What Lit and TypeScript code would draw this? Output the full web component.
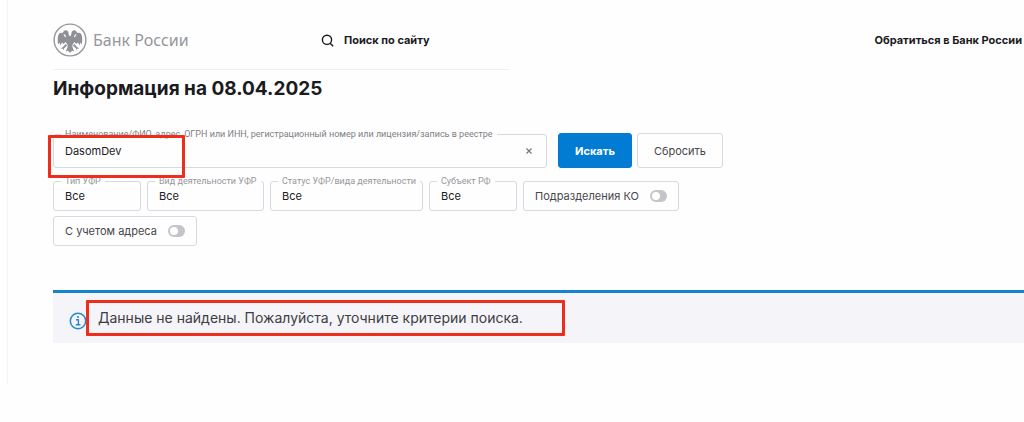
import { LitElement, html, css, svg } from "lit";
import { customElement, property } from "lit/decorators.js";

const eagle = svg`
  <circle cx="17" cy="17" r="15.9" fill="none" stroke="#96969c" stroke-width="1.4" />
  <g fill="#8f8f96">
    <path d="M5.2 21.5 C4.4 17.5 4.6 12.8 6.2 10.6 C7.4 9.2 9.4 9.6 10.4 10.8 L11.6 13.4 L12.6 14.6 C13.2 13.4 12.8 12 11.8 11.4 C10.8 11 10 10.6 9.4 10 L10.6 8.6 C11.8 6.6 14.8 7 15.4 9.4 L16 12.4 L17 13.2 L18 12.4 L18.6 9.4 C19.2 7 22.2 6.6 23.4 8.6 L24.6 10 C24 10.6 23.2 11 22.2 11.4 C21.2 12 20.8 13.4 21.4 14.6 L22.4 13.4 L23.6 10.8 C24.6 9.6 26.6 9.2 27.8 10.6 C29.4 12.8 29.6 17.5 28.8 21.5 L27.4 19.6 L26.6 22.4 L25 19.4 L23.4 21 L21.4 19 L19.6 21.4 L19.4 24 L21.2 28.4 L19 27.8 L17 29.8 L15 27.8 L12.8 28.4 L14.6 24 L14.4 21.4 L12.6 19 L10.6 21 L9 19.4 L7.4 22.4 L6.6 19.6 Z" />
    <path d="M12.8 20.8 L14 22.4 L11 25.4 L10.4 27 L9.4 25.6 L7.6 25.4 L10 24 Z M21.2 20.8 L20 22.4 L23 25.4 L23.6 27 L24.6 25.6 L26.4 25.4 L24 24 Z" />
  </g>
`;

const base = css`
  * {
    box-sizing: border-box;
  }
  button,
  input,
  select {
    font: inherit;
    color: inherit;
    margin: 0;
  }
`;

@customElement("filter-select")
export class FilterSelect extends LitElement {
  @property() label = "";

  static styles = [
    base,
    css`
      :host {
        display: block;
        position: relative;
      }
      .caption {
        position: absolute;
        left: 8px;
        top: -6px;
        padding: 0 4px;
        background: #fefefe;
        color: #96969c;
        font: 9px/12px Roboto, sans-serif;
        white-space: nowrap;
      }
      .control {
        appearance: none;
        display: block;
        width: 100%;
        height: 30px;
        padding: 0 11px;
        border: 1px solid #d9d7e0;
        border-radius: 3px;
        background: #fefefe;
      }
    `,
  ];

  render() {
    return html`
      <label class="caption" for="control">${this.label}</label>
      <select class="control" id="control"><option>Все</option></select>
    `;
  }
}

@customElement("filter-toggle")
export class FilterToggle extends LitElement {
  @property() label = "";

  static styles = [
    base,
    css`
      :host {
        display: block;
      }
      .box {
        display: flex;
        align-items: center;
        gap: 11px;
        height: 30px;
        padding: 0 11px;
        border: 1px solid #d9d7e0;
        border-radius: 3px;
        color: #46464c;
        white-space: nowrap;
      }
      .switch {
        appearance: none;
        display: flex;
        width: 17px;
        height: 12px;
        padding: 2px;
        border-radius: 6px;
        background: #c6c3ca;
      }
      .switch::before {
        content: "";
        width: 8px;
        height: 8px;
        border-radius: 50%;
        background: #fff;
      }
      .switch:checked {
        justify-content: flex-end;
        background: #027bd3;
      }
    `,
  ];

  render() {
    return html`
      <label class="box">
        <span>${this.label}</span>
        <input class="switch" type="checkbox" role="switch" />
      </label>
    `;
  }
}

@customElement("app-root")
export class AppRoot extends LitElement {
  static styles = [
    base,
    css`
      :host {
        display: block;
        min-height: 100vh;
        padding-left: 7px;
        background: #fefefe;
        color: #1b1b1f;
        font: 11px/16px Inter, "Noto Sans", sans-serif;
      }
      .page {
        border-left: 1px solid #f6f4f8;
        padding: 11px 0 0 45px;
        min-height: 384px;
      }
      .header {
        display: flex;
        align-items: center;
        height: 58px;
        padding-right: 2px;
        font-weight: 700;
      }
      .brand {
        display: flex;
        align-items: center;
        gap: 6px;
        flex: 0 0 268px;
        color: #96969c;
        font: 400 16px/24px "Noto Sans", sans-serif;
        text-decoration: none;
      }
      .search-link {
        display: flex;
        align-items: center;
        gap: 10px;
        color: inherit;
        text-decoration: none;
      }
      .contact {
        margin-left: auto;
        color: inherit;
        text-decoration: none;
      }
      .rule {
        width: 47%;
        height: 1px;
        margin: 0;
        border: 0;
        background: #f1f0f4;
      }
      .title {
        margin: 6px 0 31px;
        font-size: 19px;
        line-height: 26px;
        font-weight: 700;
      }
      .form {
        max-width: 670px;
      }
      .search-row {
        display: flex;
        align-items: center;
        gap: 5px;
      }
      .query {
        position: relative;
        z-index: 1;
        flex: 1;
        margin-right: 6px;
      }
      .query-caption {
        position: absolute;
        left: 8px;
        top: -6px;
        padding: 0 4px;
        background: #fefefe;
        color: #7e7e85;
        font: 9px/12px Roboto, sans-serif;
        white-space: nowrap;
      }
      .query-input {
        display: block;
        width: 100%;
        height: 34px;
        padding: 0 32px 0 11px;
        border: 1px solid #d5dae2;
        border-radius: 3px;
        background: #fefefe;
      }
      .clear {
        position: absolute;
        right: 10px;
        top: 9px;
        width: 16px;
        height: 16px;
        padding: 0;
        border: 0;
        background: none;
        color: #77777c;
        display: grid;
        place-items: center;
      }
      .button {
        height: 35px;
        padding: 0 16px;
        border: 1px solid #d9d7e0;
        border-radius: 3px;
        background: #fefefe;
        color: #46464c;
      }
      .primary {
        border-color: #027bd3;
        background: #027bd3;
        color: #fff;
        font-weight: 700;
      }
      .filters {
        display: flex;
        flex-wrap: wrap;
        gap: 5px 6px;
        margin-top: 13px;
      }
      .narrow {
        width: 88px;
      }
      .medium {
        width: 117px;
      }
      .wide {
        width: 153px;
      }
      .notice {
        display: flex;
        align-items: center;
        gap: 11px;
        height: 53px;
        margin-top: 44px;
        padding: 0 16px;
        border-top: 3px solid #1583cb;
        background: #f5f4f8;
        color: #3d3d43;
        font-size: 14px;
        line-height: 20px;
      }
      .info {
        flex: none;
        margin-top: 6px;
      }
      .notice-text {
        position: relative;
        margin: 0;
      }
      .mark {
        position: absolute;
        border: 3px solid #ee2d1c;
        border-radius: 1px;
        pointer-events: none;
      }
      .mark-query {
        left: -5px;
        top: 1px;
        width: 137px;
        height: 43px;
      }
      .mark-notice {
        inset: -8px -42px -8px -12px;
      }
    `,
  ];

  render() {
    return html`
      <div class="page">
        <header class="header">
          <a class="brand" href="#">
            <svg width="34" height="34" viewBox="0 0 34 34" aria-hidden="true">${eagle}</svg>
            <span>Банк России</span>
          </a>
          <a class="search-link" href="#">
            <svg width="13" height="13" viewBox="0 0 13 13" fill="none" stroke="#1b1b1f" stroke-width="1.4" aria-hidden="true">
              <circle cx="6" cy="5.8" r="4.6" />
              <path d="M9.2 9.2 L12.2 12.2" />
            </svg>
            Поиск по сайту
          </a>
          <a class="contact" href="#">Обратиться в Банк России</a>
        </header>
        <hr class="rule" />
        <main>
          <h1 class="title">Информация на 08.04.2025</h1>
          <form class="form" @submit=${(e: Event) => e.preventDefault()}>
            <div class="search-row">
              <div class="query">
                <label class="query-caption" for="query"
                  >Наименование/ФИО, адрес, ОГРН или ИНН, регистрационный номер или лицензия/запись в реестре</label
                >
                <input class="query-input" id="query" type="text" value="DasomDev" />
                <button class="clear" type="button" aria-label="Очистить">
                  <svg width="6" height="6" viewBox="0 0 6 6" stroke="currentColor" stroke-width="1.2" aria-hidden="true">
                    <path d="M.5 .5 L5.5 5.5 M5.5 .5 L.5 5.5" />
                  </svg>
                </button>
                <span class="mark mark-query"></span>
              </div>
              <button class="button primary" type="submit">Искать</button>
              <button class="button" type="reset">Сбросить</button>
            </div>
            <div class="filters">
              <filter-select class="narrow" label="Тип УФР"></filter-select>
              <filter-select class="medium" label="Вид деятельности УФР"></filter-select>
              <filter-select class="wide" label="Статус УФР/вида деятельности"></filter-select>
              <filter-select class="narrow" label="Субъект РФ"></filter-select>
              <filter-toggle label="Подразделения КО"></filter-toggle>
              <filter-toggle label="С учетом адреса"></filter-toggle>
            </div>
          </form>
          <section class="notice">
            <svg class="info" width="18" height="18" viewBox="0 0 18 18" fill="none" stroke="#2489cf" aria-hidden="true">
              <circle cx="9" cy="9" r="7.7" stroke-width="1.5" />
              <path d="M7 7.7 H9.4 V12.6 M6.8 12.8 H11.4" stroke-width="1.4" />
              <circle cx="9" cy="5" r="1.1" fill="#2489cf" stroke="none" />
            </svg>
            <p class="notice-text">
              Данные не найдены. Пожалуйста, уточните критерии поиска.
              <span class="mark mark-notice"></span>
            </p>
          </section>
        </main>
      </div>
    `;
  }
}
